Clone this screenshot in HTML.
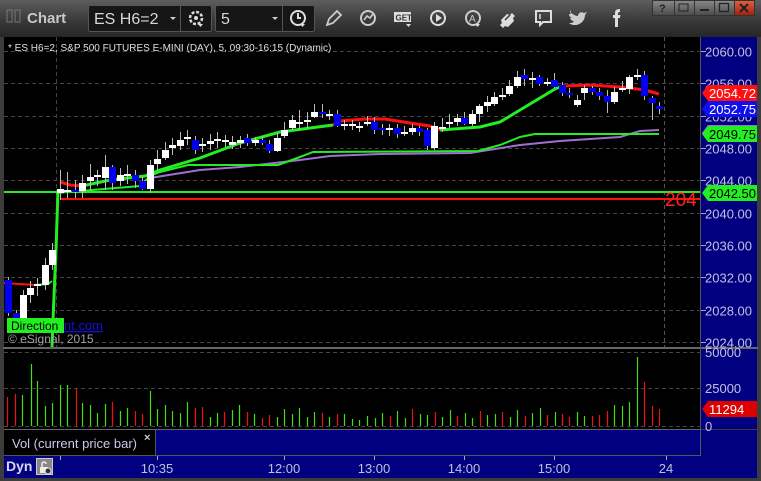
<!DOCTYPE html>
<html><head><meta charset="utf-8"><style>
body{margin:0;background:#3a3a3a;width:761px;height:481px;overflow:hidden;font-family:"Liberation Sans",sans-serif}
svg{display:block}
</style></head><body>
<svg id="s" width="761" height="481" xmlns="http://www.w3.org/2000/svg" font-family="Liberation Sans, sans-serif">
<defs>
<linearGradient id="tb" x1="0" y1="0" x2="0" y2="1"><stop offset="0" stop-color="#5e5e5e"/><stop offset="0.5" stop-color="#3c3c3c"/><stop offset="1" stop-color="#262626"/></linearGradient>
<linearGradient id="wb" x1="0" y1="0" x2="0" y2="1"><stop offset="0" stop-color="#8a8a8a"/><stop offset="1" stop-color="#4a4a4a"/></linearGradient>
<linearGradient id="xb" x1="0" y1="0" x2="0" y2="1"><stop offset="0" stop-color="#e06040"/><stop offset="1" stop-color="#a02010"/></linearGradient>
</defs>
<rect width="761" height="481" fill="#3c3c3c"/>
<rect width="761" height="37" fill="url(#tb)"/>
<!-- title -->
<rect x="7" y="10" width="5" height="12" fill="none" stroke="#777"/><rect x="15" y="10" width="5" height="12" fill="none" stroke="#777"/>
<text x="27" y="23" font-size="15" font-weight="bold" fill="#c8c8c8">Chart</text>
<rect x="88.5" y="5.5" width="123" height="26" rx="2" fill="#161616" stroke="#555"/>
<line x1="180.5" y1="6" x2="180.5" y2="31" stroke="#555"/>
<text x="94" y="24" font-size="16" fill="#d8d8d8">ES H6=2</text>
<path d="M170 17h6l-3 3z" fill="#ccc"/>
<circle cx="196" cy="18" r="6" fill="none" stroke="#ddd" stroke-width="2.5" stroke-dasharray="3 1.7"/><circle cx="196" cy="18" r="2" fill="#ddd"/><path d="M198 24h5l-2.5 3z" fill="#ddd"/>
<rect x="215.5" y="5.5" width="99" height="26" rx="2" fill="#161616" stroke="#555"/>
<line x1="282.5" y1="6" x2="282.5" y2="31" stroke="#555"/>
<text x="221" y="24" font-size="16" fill="#d8d8d8">5</text>
<path d="M272 17h6l-3 3z" fill="#ccc"/>
<circle cx="298" cy="18" r="7" fill="none" stroke="#ddd" stroke-width="2"/><path d="M298 13v5h3" fill="none" stroke="#ddd" stroke-width="2"/><path d="M300 24h5l-2.5 3z" fill="#ddd"/>
<path d="M327 25l2-6 8-8 4 4-8 8z" fill="none" stroke="#ccc" stroke-width="1.8"/>
<circle cx="368" cy="18" r="7" fill="none" stroke="#ccc" stroke-width="2"/><path d="M364 20l3-4 3 2 3-4" fill="none" stroke="#ccc" stroke-width="1.6"/>
<rect x="394" y="12" width="17" height="10" fill="#ddd"/><text x="395.5" y="20.5" font-size="8" font-weight="bold" fill="#333">GET</text><path d="M406 24h5l-2.5 3z" fill="#ddd"/>
<circle cx="438" cy="18" r="7" fill="none" stroke="#ddd" stroke-width="2"/><path d="M436 14v8l6-4z" fill="#ddd"/>
<circle cx="473" cy="18" r="7" fill="none" stroke="#ccc" stroke-width="2"/><text x="469" y="22" font-size="10" fill="#ccc">A</text><path d="M475 24h5l-2.5 3z" fill="#ddd"/>
<path d="M501 20l6-6 3 1 2-2 3 3-2 2 1 3-6 6-3-1-2 2-3-3 2-2z" fill="#ddd"/><path d="M505 20l5-5" stroke="#333" stroke-width="1.5"/>
<path d="M536 11h15v11h-8l-3 3v-3h-4z" fill="none" stroke="#ddd" stroke-width="2"/><line x1="540" y1="14" x2="540" y2="19" stroke="#ddd" stroke-width="1.5"/>
<path d="M571 13c2 1 4 3 7 3 0-3 3-5 6-3l3-1-2 3c0 6-5 10-10 10-3 0-5-1-6-2 2 0 4 0 5-2-2 0-3-1-4-3h2c-2-1-3-2-3-4h2c-1-1-1-3 0-4z" fill="#ccc"/>
<path d="M615 27v-9h-2v-3h2v-2c0-3 2-4 5-4v3c-2 0-2 1-2 2v1h2.5l-.5 3h-2v9z" fill="#ddd"/>
<!-- window buttons -->
<rect x="652.5" y="0.5" width="22" height="15" fill="url(#wb)" stroke="#333"/><text x="659" y="12" font-size="11" font-weight="bold" fill="#222">?</text>
<rect x="674.5" y="0.5" width="20" height="15" fill="url(#wb)" stroke="#333"/><rect x="679" y="4" width="9" height="7" fill="none" stroke="#222"/>
<rect x="694.5" y="0.5" width="20" height="15" fill="url(#wb)" stroke="#333"/><rect x="700" y="9" width="9" height="2" fill="#222"/>
<rect x="714.5" y="0.5" width="20" height="15" fill="url(#wb)" stroke="#333"/><rect x="719.5" y="3.5" width="9" height="8" fill="none" stroke="#222" stroke-width="1.3"/>
<rect x="734.5" y="0.5" width="20" height="15" fill="url(#xb)" stroke="#333"/><path d="M740 4l8 8M748 4l-8 8" stroke="#222" stroke-width="2"/>
<!-- panes -->
<rect x="4" y="37" width="697" height="310" fill="#000"/>
<rect x="701" y="37" width="56" height="311" fill="#000080"/>
<rect x="3" y="347" width="755" height="2" fill="#666"/>
<rect x="4" y="349" width="697" height="80" fill="#000"/>
<rect x="701" y="349" width="56" height="80" fill="#000080"/>
<line x1="4" y1="429.5" x2="701" y2="429.5" stroke="#666"/>
<rect x="4" y="430" width="151" height="26" fill="#000"/>
<rect x="155" y="430" width="545" height="26" fill="#000080"/>
<line x1="155.5" y1="430" x2="155.5" y2="456" stroke="#555"/>
<line x1="700.5" y1="430" x2="700.5" y2="456" stroke="#555"/>
<rect x="701" y="430" width="56" height="26" fill="#000080"/>
<line x1="4" y1="455.5" x2="700" y2="455.5" stroke="#555"/>
<rect x="4" y="456" width="753" height="22" fill="#000080"/>
<line x1="700.5" y1="37" x2="700.5" y2="456" stroke="#555"/>
<g id="g"></g>
<text x="8" y="51" font-size="10" fill="#e0e0e0">* ES H6=2, S&amp;P 500 FUTURES E-MINI (DAY), 5, 09:30-16:15 (Dynamic)</text>
<text x="665" y="206" font-size="19" fill="#ff2020">204</text>
<rect x="7" y="318" width="57" height="15" fill="#22ee22"/>
<text x="11" y="330" font-size="12" fill="#000">Direction</text>
<text x="64" y="330" font-size="13" fill="#1010e0" text-decoration="underline">nt.com</text>
<text x="8" y="343" font-size="12" fill="#a0a0a0">© eSignal, 2015</text>
<text x="12" y="448" font-size="13" fill="#c8c8e8">Vol (current price bar)</text>
<text x="144" y="441" font-size="11" font-weight="bold" fill="#ccc">×</text>
<text x="6" y="471" font-size="14" font-weight="bold" fill="#d8d8f0">Dyn</text>
<rect x="36.5" y="458.5" width="16" height="16" fill="#888" stroke="#ccc"/>
<path d="M40 473v-6h8v6z" fill="#eee"/><path d="M42 467v-3a2 2 0 0 1 4 0" fill="none" stroke="#eee" stroke-width="1.5"/><circle cx="48" cy="471" r="3" fill="#333" stroke="#eee"/>
</svg>
<script>
var g=document.getElementById('g'),NS='http://www.w3.org/2000/svg',h='';
function P(v){return 51+(2060-v)*8.083;}
// grid
[2060,2056,2052,2048,2044,2040,2036,2032,2028,2024].forEach(function(v){var y=Math.round(P(v))+.5;h+='<line x1="4" x2="701" y1="'+y+'" y2="'+y+'" stroke="#444" stroke-dasharray="4 3"/><line x1="701" x2="706" y1="'+y+'" y2="'+y+'" stroke="#aaa"/><text x="705" y="'+(y+5)+'" font-size="13" fill="#c0c0dc">'+v+'.00</text>';});
[352,388,426].forEach(function(y,i){h+='<line x1="4" x2="701" y1="'+(y+.5)+'" y2="'+(y+.5)+'" stroke="#444" stroke-dasharray="4 3"/><text x="705" y="'+(y+5)+'" font-size="13" fill="#c0c0dc">'+['50000','25000','0'][i]+'</text>';});
h+='<line x1="56.5" x2="56.5" y1="37" y2="347" stroke="#444" stroke-dasharray="4 3"/><line x1="664.5" x2="664.5" y1="37" y2="347" stroke="#555" stroke-dasharray="4 3"/>';
// time labels
[['10:35',157],['12:00',284],['13:00',374],['14:00',464],['15:00',554],['24',666]].forEach(function(t){h+='<line x1="'+t[1]+'.5" x2="'+t[1]+'.5" y1="456" y2="460" stroke="#aaa"/><text x="'+t[1]+'" y="473" font-size="13" fill="#c0c0dc" text-anchor="middle">'+t[0]+'</text>';});
h+='<line x1="60.5" x2="60.5" y1="456" y2="460" stroke="#aaa"/>';
// lines
function pl(pts,c,w){h+='<polyline points="'+pts+'" fill="none" stroke="'+c+'" stroke-width="'+w+'"/>';}
pl('4,192 700,192','#22ee22',2);pl('60,199 700,199','#ff1010',2);
pl('150,178 200,170 240,167 300,160 330,156 380,154 470,153 520,145 560,141 620,137 640,131 659,130','#a070d0',2);
pl('56,193 140,186 150,176 160,172 188,165 278,165 300,157 313,152 478,151 500,145 520,137 535,134 659,134','#22ee22',2);
pl('4,283 35,285','#ff1010',2);pl('35,285 48,284 52,281','#22ee22',2);
pl('52,347 53,320 56,250 58,190','#22ee22',3);
pl('60,182 70,185 82,186','#ff1010',3);
pl('82,186 110,180 145,176 160,170 200,158 240,143 280,132 333,125','#22ee22',3);
pl('333,125 340,121 365,119 385,119 410,123 430,126 440,130','#ff1010',3);
pl('440,130 480,127 500,122 520,110 540,98 555,89 562,86','#22ee22',3);
pl('562,86 590,85 620,87 645,90 659,94','#ff1010',3);
// candles [x,top,bot,hi,lo,c] c:w white b blue
var C=[[8,280,313,277,316,'b'],[16,313,322,310,326,'b'],[23,295,320,290,322,'w'],[30,288,295,281,303,'w'],[37,284,286,278,296,'w'],[45,265,285,258,290,'w'],[52,250,265,243,270,'w'],
[60,189,193,170,200,'w'],[67,190,192,172,198,'w'],[75,190,192,180,198,'b'],[82,183,191,175,198,'w'],[90,177,181,164,190,'w'],[97,175,177,170,186,'w'],[105,167,178,155,190,'w'],[112,167,183,165,190,'b'],[120,175,181,168,186,'w'],[127,174,176,165,184,'w'],[135,175,181,170,188,'b'],[142,181,189,176,190,'b'],[150,165,189,160,193,'w'],[157,159,164,150,170,'w'],[165,150,158,142,160,'w'],
[172,145,148,138,155,'w'],[180,140,146,132,150,'w'],[187,137,139,130,145,'w'],[195,140,150,136,154,'b'],[202,144,146,138,152,'w'],[210,141,144,134,150,'w'],[217,139,141,132,148,'w'],[225,140,142,135,147,'w'],[232,142,145,136,149,'w'],
[240,140,143,136,148,'w'],[247,138,143,134,146,'b'],[255,140,143,137,146,'w'],[262,140,143,136,145,'b'],[269,144,151,140,153,'b'],[277,138,151,133,152,'w'],[284,130,136,122,138,'w'],[292,120,128,115,130,'w'],[299,122,124,110,130,'w'],[307,120,122,112,128,'w'],[314,112,117,104,118,'w'],[322,112,114,104,118,'b'],[329,114,115,110,120,'w'],[337,114,126,110,127,'b'],[344,124,126,120,130,'w'],[352,124,126,120,130,'w'],[359,126,127,122,132,'w'],[367,122,124,116,126,'w'],[374,122,130,117,134,'b'],[382,128,130,124,135,'b'],[389,128,130,124,136,'w'],[397,128,134,124,138,'b'],[404,132,133,126,136,'w'],[412,128,132,124,135,'w'],[419,128,132,126,136,'b'],[427,130,146,128,150,'b'],[434,126,148,122,150,'w'],
[442,127,128,118,132,'w'],[449,122,124,114,128,'w'],[457,118,122,114,126,'w'],[464,118,124,112,125,'b'],[472,114,124,110,126,'w'],[479,106,114,104,122,'w'],[487,102,106,96,112,'w'],[494,97,104,92,106,'w'],[502,95,96,88,100,'w'],[509,86,94,80,96,'w'],[517,77,86,71,88,'w'],[524,75,79,69,86,'b'],[532,78,80,72,88,'w'],[539,77,84,75,86,'b'],[547,82,83,78,86,'w'],[554,80,87,73,88,'b'],[562,85,93,82,96,'b'],[569,93,95,88,98,'b'],[577,100,105,95,107,'w'],[584,88,93,85,100,'w'],[592,88,92,86,95,'b'],[599,92,96,88,100,'b'],[607,96,102,90,113,'b'],[614,92,102,87,104,'w'],[622,88,89,81,92,'w'],[629,77,89,75,94,'w'],[637,75,77,69,80,'w'],[644,75,96,71,100,'b'],[652,98,103,96,120,'b'],[659,106,109,102,114,'b']];
C.forEach(function(c){var x=c[0],col=c[5]=='w'?'#fff':'#0000ee';h+='<line x1="'+(x+.5)+'" x2="'+(x+.5)+'" y1="'+c[3]+'" y2="'+c[4]+'" stroke="#bbb"/><rect x="'+(x-3)+'" y="'+c[1]+'" width="7" height="'+Math.max(2,c[2]-c[1])+'" fill="'+col+'"/>';});
// volume
var V=[[7,397,'r'],[15,394,'r'],[22,395,'g'],[31,364,'g'],[37,381,'g'],[45,406,'g'],[52,403,'g'],[60,385,'g'],[67,385,'g'],[76,389,'r'],[82,403,'g'],[90,405,'g'],[97,413,'g'],[105,404,'g'],[112,402,'r'],[120,411,'g'],[127,408,'g'],[135,411,'r'],[142,414,'r'],[150,391,'g'],[157,409,'g'],[165,405,'g'],[172,411,'g'],[180,413,'g'],[187,402,'g'],[195,408,'r'],[202,407,'r'],[210,417,'g'],[217,413,'g'],[224,412,'r'],[232,410,'g'],[239,405,'g'],[247,412,'r'],[254,414,'g'],[262,418,'r'],[269,415,'r'],[277,417,'g'],[284,409,'g'],[292,414,'g'],[299,408,'g'],[307,417,'g'],[314,412,'g'],[322,413,'r'],[329,417,'g'],[337,414,'r'],[344,414,'g'],[352,419,'g'],[359,420,'g'],[367,416,'g'],[375,418,'g']];
var pr=[413,416,411,418,409,414,415,412,417,410,416,413,418,411,415,414,412,417,410,416,413,408,415,412,418];
for(var i=0;i<25;i++){V.push([382+7.5*i,pr[i],i%3==1?'r':'g']);}
[[562,414,'r'],[569,417,'r'],[577,412,'g'],[584,416,'g'],[592,416,'r'],[599,415,'r'],[607,411,'r'],[614,405,'g'],[622,406,'g'],[629,402,'g'],[637,357,'g'],[644,382,'r'],[652,406,'r'],[659,409,'r']].forEach(function(v){V.push(v);});
V.forEach(function(v){var x=Math.round(v[0])+.5;h+='<line x1="'+x+'" x2="'+x+'" y1="'+v[1]+'" y2="426" stroke="'+(v[2]=='r'?'#ee1010':'#44dd10')+'" stroke-width="1.2"/>';});
// tags
function tag(y,bg,fg,t){h+='<path d="M702 '+y+'l6 -8h49v16h-49z" fill="'+bg+'"/><text x="709" y="'+(y+5)+'" font-size="13" fill="'+fg+'">'+t+'</text>';}
tag(133,'#a070d0','#000','');
tag(93,'#ff1010','#fff','2054.72');tag(109,'#1010ee','#fff','2052.75');tag(134,'#22ee22','#000','2049.75');tag(193,'#22ee22','#000','2042.50');tag(409,'#dd0000','#fff','11294');
g.innerHTML=h;
</script>
</body></html>
